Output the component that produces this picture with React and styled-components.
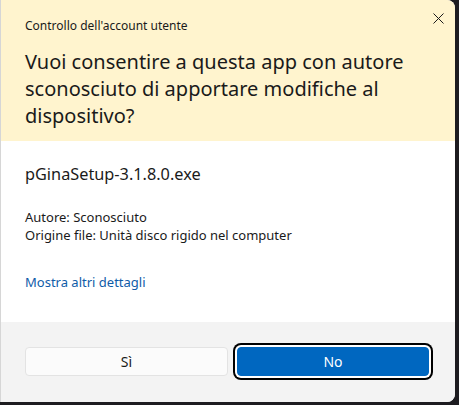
import React from "react";
import styled, { createGlobalStyle } from "styled-components";

const Global = createGlobalStyle`
  html, body { margin: 0; padding: 0; }
  body {
    background: #1d1c20;
    width: 459px;
    height: 405px;
    overflow: hidden;
    font-family: "Noto Sans", "Open Sans", sans-serif;
  }
`;

const Dialog = styled.div`
  box-sizing: border-box;
  width: 455px;
  height: 402px;
  display: flex;
  flex-direction: column;
  border-left: 1px solid #d6d6d6;
  border-radius: 0 8px 8px 0;
  overflow: hidden;
  background: #ffffff;
`;

const Header = styled.div`
  position: relative;
  background: #fff4ce;
  height: 141px;
  box-sizing: border-box;
  padding: 18px 24px 0 24px;
  color: #1a1a1a;
`;

const Caption = styled.div`
  font-size: 12px;
  line-height: 16px;
`;

const Title = styled.h1`
  margin: 14px 0 0 0;
  font-weight: 400;
  font-size: 20px;
  line-height: 27px;
  color: #1a1a1a;
`;

const Close = styled.button`
  position: absolute;
  top: 7px;
  right: 6px;
  width: 22px;
  height: 22px;
  border: none;
  background: transparent;
  padding: 0;
  display: flex;
  align-items: center;
  justify-content: center;
`;

const Body = styled.div`
  flex: 1;
  padding: 22px 24px 0 24px;
  color: #1a1a1a;
`;

const FileName = styled.div`
  font-size: 16.3px;
  line-height: 22px;
`;

const Info = styled.div`
  margin-top: 23px;
  font-size: 13px;
  line-height: 18px;
`;

const Link = styled.a`
  display: block;
  margin-top: 29px;
  font-size: 13px;
  line-height: 18px;
  color: #0f5ca8;
  text-decoration: none;
`;

const Footer = styled.div`
  height: 80px;
  box-sizing: border-box;
  background: #f3f3f3;
  padding: 25px 26px 0 24px;
  display: grid;
  grid-template-columns: 203px 1fr;
  column-gap: 9px;
  align-items: start;
`;

const Button = styled.button`
  height: 29px;
  box-sizing: border-box;
  border-radius: 4px;
  font-family: inherit;
  font-size: 14px;
  border: 1px solid ${(p) => (p.$primary ? "#0067c0" : "#e3e3e3")};
  background: ${(p) => (p.$primary ? "#0067c0" : "#fbfbfb")};
  color: ${(p) => (p.$primary ? "#ffffff" : "#1a1a1a")};
  box-shadow: ${(p) =>
    p.$focused ? "0 0 0 2px #ffffff, 0 0 0 4px #000000" : "none"};
  padding: 0;
`;

export default function App() {
  return (
    <>
      <Global />
      <Dialog>
        <Header>
          <Caption>Controllo dell'account utente</Caption>
          <Title>
            Vuoi consentire a questa app con autore sconosciuto di apportare
            modifiche al dispositivo?
          </Title>
          <Close aria-label="Chiudi">
            <svg width="11" height="11" viewBox="0 0 11 11">
              <path d="M0.5 0.5 L10.5 10.5 M10.5 0.5 L0.5 10.5" stroke="#1a1a1a" strokeWidth="1" fill="none" />
            </svg>
          </Close>
        </Header>
        <Body>
          <FileName>pGinaSetup-3.1.8.0.exe</FileName>
          <Info>
            Autore: Sconosciuto
            <br />
            Origine file: Unità disco rigido nel computer
          </Info>
          <Link href="#">Mostra altri dettagli</Link>
        </Body>
        <Footer>
          <Button>Sì</Button>
          <Button $primary $focused>
            No
          </Button>
        </Footer>
      </Dialog>
    </>
  );
}
